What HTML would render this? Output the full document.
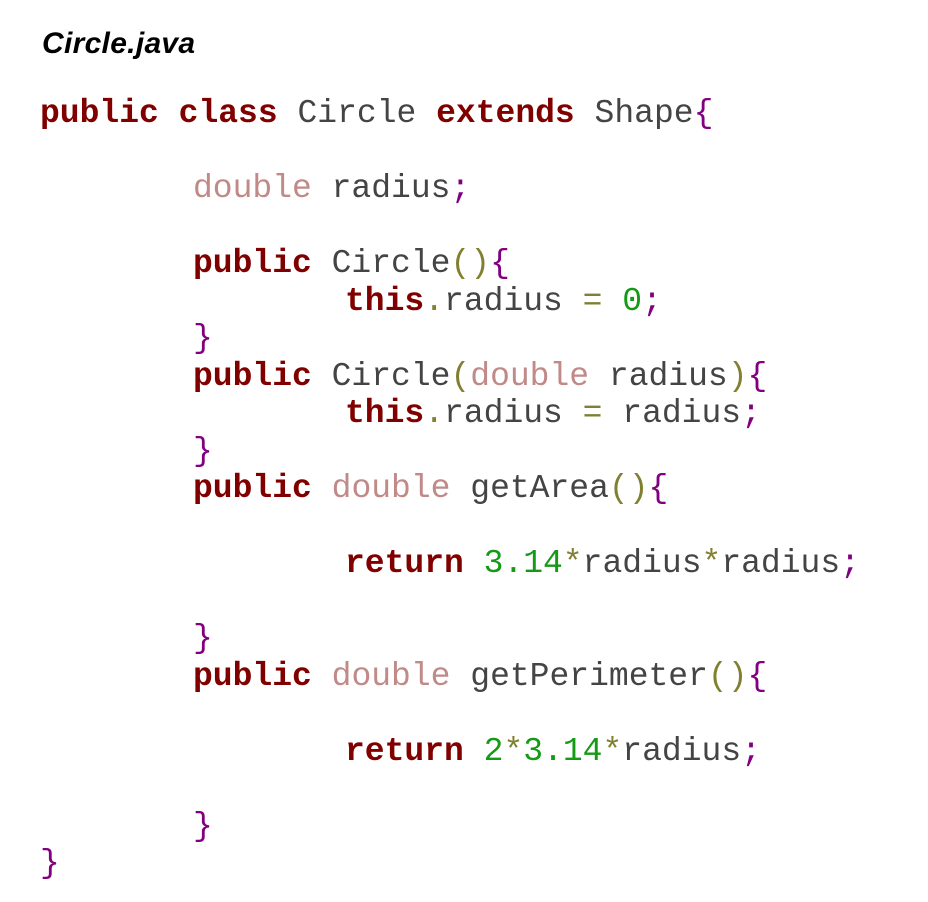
<!DOCTYPE html>
<html><head><meta charset="utf-8"><style>
body{margin:0;width:928px;height:902px;background:#fff;position:relative;overflow:hidden}
.t{position:absolute;left:42px;top:27px;font:bold italic 30px "Liberation Sans",sans-serif;letter-spacing:0.3px;color:#000}
.l{position:absolute;white-space:pre;font-family:"Liberation Mono",monospace;font-size:33px;line-height:37.5px;color:#444}
.k{color:#800000;font-weight:bold}
.d{color:#c08a88}
.b{color:#800080}
.p{color:#808030}
.n{color:#159a15}
</style></head><body>
<div class="t">Circle.java</div>
<div class="l" style="left:40px;top:95px"><span class="k">public</span> <span class="k">class</span> Circle <span class="k">extends</span> Shape<span class="b">{</span></div>
<div class="l" style="left:193px;top:170px"><span class="d">double</span> radius<span class="b">;</span></div>
<div class="l" style="left:193px;top:245px"><span class="k">public</span> Circle<span class="p">()</span><span class="b">{</span></div>
<div class="l" style="left:345px;top:283px"><span class="k">this</span><span class="p">.</span>radius <span class="p">=</span> <span class="n">0</span><span class="b">;</span></div>
<div class="l" style="left:193px;top:320px"><span class="b">}</span></div>
<div class="l" style="left:193px;top:358px"><span class="k">public</span> Circle<span class="p">(</span><span class="d">double</span> radius<span class="p">)</span><span class="b">{</span></div>
<div class="l" style="left:345px;top:395px"><span class="k">this</span><span class="p">.</span>radius <span class="p">=</span> radius<span class="b">;</span></div>
<div class="l" style="left:193px;top:433px"><span class="b">}</span></div>
<div class="l" style="left:193px;top:470px"><span class="k">public</span> <span class="d">double</span> getArea<span class="p">()</span><span class="b">{</span></div>
<div class="l" style="left:345px;top:545px"><span class="k">return</span> <span class="n">3.14</span><span class="p">*</span>radius<span class="p">*</span>radius<span class="b">;</span></div>
<div class="l" style="left:193px;top:620px"><span class="b">}</span></div>
<div class="l" style="left:193px;top:658px"><span class="k">public</span> <span class="d">double</span> getPerimeter<span class="p">()</span><span class="b">{</span></div>
<div class="l" style="left:345px;top:733px"><span class="k">return</span> <span class="n">2</span><span class="p">*</span><span class="n">3.14</span><span class="p">*</span>radius<span class="b">;</span></div>
<div class="l" style="left:193px;top:808px"><span class="b">}</span></div>
<div class="l" style="left:40px;top:845px"><span class="b">}</span></div>
</body></html>
